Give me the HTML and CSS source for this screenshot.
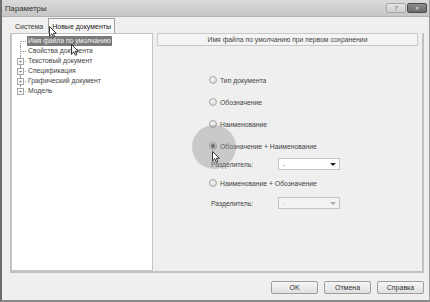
FILE: index.html
```html
<!DOCTYPE html>
<html lang="ru">
<head>
    <meta charset="UTF-8">
    <title>Параметры</title>
    <link rel="stylesheet" href="styles.css">
</head>
<body>
    <div class="window">
        <div class="titlebar">
            <span class="title">Параметры</span>
            <div class="caption-btns">
                <span class="cbtn help">?</span>
                <span class="cbtn close">&#x2715;</span>
            </div>
        </div>

        <div class="tabs">
            <span class="tab">Система</span>
            <span class="tab active">Новые документы</span>
        </div>

        <div class="panel">
            <ul class="tree">
                <li class="node first"><span class="twig"></span><span class="label selected">Имя файла по умолчанию</span></li>
                <li class="node"><span class="twig"></span><span class="label">Свойства документа</span></li>
                <li class="node"><span class="twig plus"><i>+</i></span><span class="label">Текстовый документ</span></li>
                <li class="node"><span class="twig plus"><i>+</i></span><span class="label">Спецификация</span></li>
                <li class="node"><span class="twig plus"><i>+</i></span><span class="label">Графический документ</span></li>
                <li class="node last"><span class="twig plus"><i>+</i></span><span class="label">Модель</span></li>
            </ul>

            <div class="page">
                <div class="page-head">Имя файла по умолчанию при первом сохранении</div>
                <div class="options">
                    <div class="opt r1"><span class="radio"></span>Тип документа</div>
                    <div class="opt"><span class="radio"></span>Обозначение</div>
                    <div class="opt"><span class="radio"></span>Наименование</div>
                    <div class="opt"><span class="radio checked"></span>Обозначение + Наименование</div>
                    <div class="sep s1">
                        <span class="sep-label">Разделитель:</span>
                        <span class="select">-<b class="arrow"></b></span>
                    </div>
                    <div class="opt r5"><span class="radio"></span>Наименование + Обозначение</div>
                    <div class="sep s2">
                        <span class="sep-label">Разделитель:</span>
                        <span class="select disabled">-<b class="arrow"></b></span>
                    </div>
                </div>
            </div>
        </div>

        <div class="footer">
            <button type="button">OK</button>
            <button type="button">Отмена</button>
            <button type="button">Справка</button>
        </div>

        <!-- click highlight and pointers drawn over the dialog -->
        <span class="ring"></span>
        <svg class="cursor c1" width="8" height="12" viewBox="0 0 8 12"><path d="M0.5 0.5 L0.5 10 L2.8 7.8 L4.4 11.3 L5.8 10.7 L4.3 7.3 L7.3 7.3 Z" fill="#fff" stroke="#222" stroke-width="0.9"/></svg>
        <svg class="cursor c2" width="8" height="12" viewBox="0 0 8 12"><path d="M0.5 0.5 L0.5 10 L2.8 7.8 L4.4 11.3 L5.8 10.7 L4.3 7.3 L7.3 7.3 Z" fill="#fff" stroke="#222" stroke-width="0.9"/></svg>
        <svg class="cursor c3" width="8" height="12" viewBox="0 0 8 12"><path d="M0.5 0.5 L0.5 10 L2.8 7.8 L4.4 11.3 L5.8 10.7 L4.3 7.3 L7.3 7.3 Z" fill="#fff" stroke="#222" stroke-width="0.9"/></svg>
    </div>
</body>
</html>
```

FILE: styles.css
```css
* {
    box-sizing: border-box;
}
body {
    margin: 0;
    background-color: #efefef;
    font-family: "Liberation Sans", Arial, sans-serif;
    font-size: 6.8px;
    color: #444;
}
.window {
    position: relative;
    width: 430px;
    height: 302px;
    background-color: #efefef;
    border-left: 2px solid #6e6e6e;
    border-right: 1px solid #9a9a9a;
    border-bottom: 2px solid #8a8a8a;
    overflow: hidden;
}
.titlebar {
    height: 17px;
    display: flex;
    justify-content: space-between;
    align-items: center;
    padding: 0 2px 0 3px;
    background: linear-gradient(#dadada, #c6c6c6);
    border-bottom: 1px solid #b0b0b0;
}
.title {
    font-size: 7.8px;
    color: #303030;
}
.caption-btns {
    display: flex;
    gap: 1px;
}
.cbtn {
    width: 20px;
    height: 10px;
    display: flex;
    justify-content: center;
    align-items: center;
    font-size: 6px;
    border-radius: 2px;
}
.help {
    background: linear-gradient(#e4e4e4, #cfcfcf);
    border: 1px solid #a8a8a8;
    color: #888;
    font-weight: bold;
}
.close {
    background: linear-gradient(#8c8c8c, #6a6a6a);
    border: 1px solid #4a4a4a;
    color: #eee;
    font-size: 5px;
}
.tabs {
    height: 16px;
    display: flex;
    align-items: flex-end;
    padding-left: 9px;
}
.tab {
    height: 13px;
    padding: 0 4px;
    display: flex;
    align-items: center;
    font-size: 7px;
    color: #3a3a3a;
}
.tab.active {
    height: 15px;
    padding: 0 3px;
    background-color: #f7f7f7;
    border: 1px solid #a0a0a0;
    border-bottom: none;
    color: #222;
    margin-left: 1px;
}
.panel {
    display: flex;
    height: 240px;
    margin-left: 8px;
    width: 414px;
    border-bottom: 2px solid #c2c2c2;
}
.tree {
    list-style: none;
    margin: 0;
    padding: 2px 0 0 4px;
    width: 143px;
    height: 238px;
    background-color: #fff;
    border: 1px solid #c4c4c4;
    border-left-width: 2px;
}
.node {
    height: 10px;
    display: flex;
    align-items: center;
}
.twig {
    position: relative;
    width: 10px;
    height: 10px;
    margin-right: 1px;
    flex: none;
}
.twig::before {
    content: "";
    position: absolute;
    left: 4px;
    top: 0;
    bottom: 0;
    border-left: 1px dotted #999;
}
.twig::after {
    content: "";
    position: absolute;
    left: 4px;
    right: 0;
    top: 5px;
    border-top: 1px dotted #999;
}
.first .twig::before {
    top: 5px;
}
.last .twig::before {
    bottom: 5px;
}
.twig.plus i {
    position: absolute;
    left: 1px;
    top: 2px;
    width: 7px;
    height: 7px;
    z-index: 1;
    background-color: #fff;
    border: 1px solid #a4a4a4;
    font-style: normal;
    font-size: 6px;
    line-height: 5px;
    text-align: center;
    color: #555;
}
.label {
    padding: 0 1px;
    height: 10px;
    line-height: 10px;
    white-space: nowrap;
    color: #444;
}
.label.selected {
    background-color: #7b7b7b;
    color: #f2f2f2;
}
.page {
    flex: 1;
    padding: 0 4px;
    border-right: 2px solid #c2c2c2;
}
.page-head {
    height: 13px;
    display: flex;
    justify-content: center;
    align-items: center;
    background-color: #f4f4f4;
    border: 1px solid #c8c8c8;
    color: #444;
}
.options {
    display: flex;
    flex-direction: column;
    padding-left: 52px;
}
.opt {
    height: 10px;
    display: flex;
    align-items: center;
    gap: 3px;
    margin-top: 12px;
    white-space: nowrap;
}
.opt.r1 {
    margin-top: 29px;
}
.opt.r5 {
    margin-top: 8px;
}
.radio {
    width: 8px;
    height: 8px;
    border-radius: 50%;
    border: 1px solid #a6a6a6;
    background: radial-gradient(circle at 40% 35%, #f6f6f6, #d4d4d4);
    display: flex;
    justify-content: center;
    align-items: center;
}
.radio.checked::after {
    content: "";
    width: 4px;
    height: 4px;
    border-radius: 50%;
    background-color: #555;
}
.sep {
    height: 12px;
    display: flex;
    align-items: center;
    padding-left: 2px;
    margin-top: 7px;
}
.sep.s2 {
    margin-top: 9px;
}
.sep-label {
    width: 67px;
}
.select {
    position: relative;
    width: 62px;
    height: 12px;
    padding-left: 4px;
    line-height: 11px;
    background-color: #fff;
    border: 1px solid #c4c4c4;
    color: #777;
}
.select .arrow {
    position: absolute;
    right: 3px;
    top: 4px;
    border-left: 3px solid transparent;
    border-right: 3px solid transparent;
    border-top: 3px solid #222;
}
.select.disabled {
    background-color: #f3f3f3;
    color: #bbb;
}
.select.disabled .arrow {
    border-top-color: #aaa;
}
.footer {
    display: flex;
    justify-content: flex-end;
    gap: 6px;
    padding: 8px 5px 0 0;
}
.footer button {
    width: 47px;
    height: 13px;
    padding: 0;
    font-family: inherit;
    font-size: 7px;
    color: #333;
    background: linear-gradient(#f6f6f6, #e0e0e0);
    border: 1px solid #9c9c9c;
    border-radius: 2px;
}
.ring {
    position: absolute;
    left: 190px;
    top: 125px;
    width: 44px;
    height: 44px;
    border-radius: 50%;
    background-color: rgba(140, 140, 140, 0.38);
}
.cursor {
    position: absolute;
}
.c1 {
    left: 47px;
    top: 26px;
}
.c2 {
    left: 69px;
    top: 44px;
}
.c3 {
    left: 210px;
    top: 151px;
}
```
